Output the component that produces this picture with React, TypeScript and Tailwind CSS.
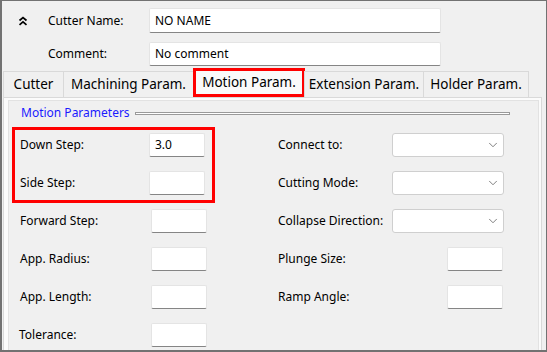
import { ChevronDown } from 'lucide-react'

const tabs = [
  { label: 'Cutter', w: 'w-[61px]' },
  { label: 'Machining Param.', w: 'w-[131px]' },
  { label: 'Motion Param.', w: 'w-[112px]', active: true },
  { label: 'Extension Param.', w: 'w-[120px]' },
  { label: 'Holder Param.', w: 'w-[106px]' },
]

function TextBox({ value = '', className = '' }: { value?: string; className?: string }) {
  return (
    <div
      className={`h-[24px] bg-white border border-[#e4e4e4] border-b-[#858585] rounded-[2px] pl-[5px] flex items-center ${className}`}
    >
      {value}
    </div>
  )
}

function Combo() {
  return (
    <div className="w-[112px] h-[24px] bg-white border border-[#cfcfcf] rounded-[3px] flex items-center justify-end pr-[3px]">
      <ChevronDown size={14} strokeWidth={1.2} className="text-[#4a4a4a]" />
    </div>
  )
}

function Row({ label, labelW, children }: { label: string; labelW: string; children: React.ReactNode }) {
  return (
    <div className="flex items-center h-[24px]">
      <span className={labelW}>{label}</span>
      {children}
    </div>
  )
}

export default function App() {
  return (
    <div className="w-[547px] h-[352px] overflow-hidden bg-[#f0f0f0] border-t border-r border-l-2 border-b-2 border-[#727272] font-['Noto_Sans',sans-serif] text-[12px] text-black">
      {/* header */}
      <div className="pt-[7px]">
        <div className="flex items-center h-[25px]">
          <div className="w-[46px] pl-[16px]">
            <svg width="10" height="10" viewBox="0 0 10 10" fill="none" stroke="black" strokeWidth="1.7">
              <polyline points="1.5,4.5 5,1.5 8.5,4.5" />
              <polyline points="1.5,8.8 5,5.8 8.5,8.8" />
            </svg>
          </div>
          <span className="w-[101px]">Cutter Name:</span>
          <TextBox value="NO NAME" className="w-[292px] h-[25px]" />
        </div>
        <div className="flex items-center h-[23px] mt-[9px]">
          <span className="w-[101px] ml-[46px]">Comment:</span>
          <TextBox value="No comment" className="w-[292px] h-[23px]" />
        </div>
      </div>

      {/* tabs */}
      <div className="flex items-end h-[29px] mt-[3px] pl-[1px] text-[13.5px]">
        {tabs.map(t =>
          t.active ? (
            <div
              key={t.label}
              className={`${t.w} h-[29px] border-[3px] border-[#ff0000] bg-[#fafafa] flex items-center justify-center -ml-px`}
            >
              {t.label}
            </div>
          ) : (
            <div
              key={t.label}
              className={`${t.w} h-[26px] border border-b-0 border-[#d9d9d9] bg-[#f0f0f0] flex items-center justify-center -ml-px first:ml-0`}
            >
              {t.label}
            </div>
          )
        )}
      </div>

      {/* tab page */}
      <div className="ml-[1px] w-[539px] h-[260px] border border-[#d9d9d9] bg-[#fbfbfb] pl-[4px] pt-[2px] pr-[2px]">
        <div className="h-full bg-[#f0f0f0] border border-[#e2e2e2]">
          <div className="flex items-center h-[20px] mt-[2px] pl-[12px]">
            <span className="text-[#1a1aff]">Motion Parameters</span>
            <div className="ml-[5px] w-[375px] h-[3px] border border-[#9a9a9a] bg-white" />
          </div>

          <div className="flex mt-[10px] pl-[11px]">
            {/* left column */}
            <div className="w-[258px] flex flex-col gap-[14px]">
              <div className="relative flex flex-col gap-[14px] w-[185px]">
                <Row label="Down Step:" labelW="w-[129px]">
                  <TextBox value="3.0" className="w-[56px]" />
                </Row>
                <Row label="Side Step:" labelW="w-[129px]">
                  <TextBox className="w-[56px]" />
                </Row>
                <div className="absolute -left-[8px] -top-[6px] -right-[10px] -bottom-[8px] border-[3px] border-[#ff0000]" />
              </div>
              <Row label="Forward Step:" labelW="w-[131px]">
                <TextBox className="w-[56px]" />
              </Row>
              <Row label="App. Radius:" labelW="w-[131px]">
                <TextBox className="w-[56px]" />
              </Row>
              <Row label="App. Length:" labelW="w-[131px]">
                <TextBox className="w-[56px]" />
              </Row>
              <Row label="Tolerance:" labelW="w-[132px] -ml-px">
                <TextBox className="w-[56px]" />
              </Row>
            </div>

            {/* right column */}
            <div className="flex flex-col gap-[14px]">
              <Row label="Connect to:" labelW="w-[114px]">
                <Combo />
              </Row>
              <Row label="Cutting Mode:" labelW="w-[114px]">
                <Combo />
              </Row>
              <Row label="Collapse Direction:" labelW="w-[114px]">
                <Combo />
              </Row>
              <Row label="Plunge Size:" labelW="w-[169px]">
                <TextBox className="w-[56px]" />
              </Row>
              <Row label="Ramp Angle:" labelW="w-[169px]">
                <TextBox className="w-[56px]" />
              </Row>
            </div>
          </div>
        </div>
      </div>
    </div>
  )
}
